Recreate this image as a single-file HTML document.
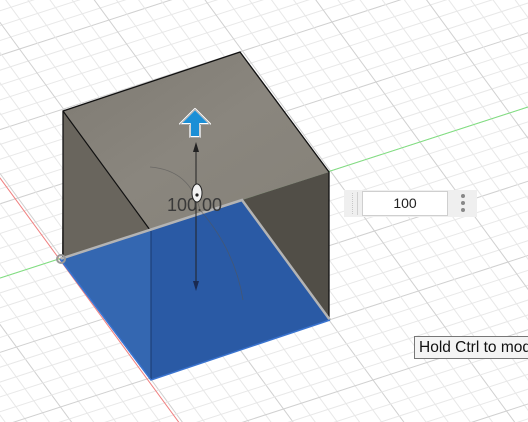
<!DOCTYPE html>
<html><head><meta charset="utf-8"><style>
html,body{margin:0;padding:0;width:528px;height:422px;overflow:hidden;background:#fff;font-family:"Liberation Sans",sans-serif;position:relative}
svg{position:absolute;left:0;top:0}
</style></head><body>
<svg id="s" width="528" height="422" viewBox="0 0 528 422">
<defs>
<linearGradient id="tg" x1="0" y1="0" x2="1" y2="1"><stop offset="0" stop-color="#7e7a72"/><stop offset="0.5" stop-color="#8a867e"/><stop offset="1" stop-color="#858178"/></linearGradient>
</defs>
<g id="grid"></g>
<line x1="-60" y1="96" x2="183" y2="428" stroke="#f08080" stroke-width="1"/>
<line x1="0" y1="278" x2="528" y2="107" stroke="#7ee07e" stroke-width="1"/>
<polygon points="63,111 240,52 329,172 242,200 150,230" fill="url(#tg)"/>
<polygon points="63,111 150,230 62,258" fill="#69655d"/>
<polygon points="242,200 329,172 329,320" fill="#514e47"/>
<polygon points="60,259 242,200 330,320 151,380" fill="#2a5aa5"/>
<polygon points="60,259 151,229.5 151,380" fill="#3467b1"/>
<line x1="151" y1="231" x2="151" y2="380" stroke="#1a3a70" stroke-width="1"/>
<polyline points="63,258 63,111 240,52 329,172 329,320" fill="none" stroke="#111" stroke-width="1.3"/>
<line x1="63" y1="111" x2="150" y2="230" stroke="#111" stroke-width="1.2"/>
<polyline points="60,259 242,200 330,320" fill="none" stroke="#b4b4b4" stroke-width="2.5"/>
<polyline points="330,320 151,380 60,259" fill="none" stroke="#3a74d0" stroke-width="1.5"/>
<circle cx="61" cy="259" r="4" fill="none" stroke="#999" stroke-width="2"/>
<path d="M150,167 Q190,170 200,210 Q235,250 243,300" fill="none" stroke="#555" stroke-width="0.8" opacity="0.6"/>
<line x1="196" y1="146" x2="196" y2="285" stroke="#222" stroke-width="1"/>
<path d="M193,152 L196,142 L199,152 Z" fill="#222"/>
<path d="M193,281 L196,291 L199,281 Z" fill="#1a2a50"/>
<text x="167" y="211" font-size="18" fill="#3a3a3a" font-family="Liberation Sans,sans-serif">100.00</text>
<ellipse cx="197" cy="193" rx="5" ry="9" fill="#f2f2f2" stroke="#222" stroke-width="1"/>
<circle cx="197" cy="195" r="1.6" fill="#222"/>
<path d="M195,109 L210,124 L200,124 L200,137 L190,137 L190,124 L180,124 Z" fill="#1b8fd6" stroke="#fff" stroke-width="2" stroke-linejoin="round"/>
<path d="M195,109 L210,124 L200,124 L200,137 L190,137 L190,124 L180,124 Z" fill="none" stroke="#333" stroke-width="0.7" transform="translate(0,0.5)" opacity="0.6"/>
</svg>
<div style="position:absolute;left:344px;top:190px;width:133px;height:27px;background:#efefef"></div>
<div style="position:absolute;left:352px;top:193px;width:0;height:21px;border-left:1px dotted #c8c8c8"></div>
<div style="position:absolute;left:357px;top:192px;width:1px;height:23px;background:#d0d0d0"></div>
<div style="position:absolute;left:362px;top:191px;width:84px;height:23px;background:#fff;border:1px solid #cfcfcf;font-size:14px;color:#222;text-align:center;line-height:23px">100</div>
<div style="position:absolute;left:461px;top:194px;width:4px;height:20px">
<div style="width:4px;height:4px;border-radius:2px;background:#888;margin-bottom:3px"></div>
<div style="width:4px;height:4px;border-radius:2px;background:#888;margin-bottom:3px"></div>
<div style="width:4px;height:4px;border-radius:2px;background:#888"></div></div>
<div style="position:absolute;left:414px;top:336px;width:110px;height:21px;background:#f4f4f4;border:1px solid #777;border-right:none;font-size:15.5px;color:#111;line-height:21px;padding-left:4px;white-space:nowrap;overflow:hidden">Hold Ctrl to modify</div>
<script>
var g=document.getElementById('grid');
var ox=62,oy=258,ax=1.79,ay=-0.58,bx=0.88,by=1.20,h='';
for(var k=-40;k<=40;k++){
 var m=k%5==0,c=m?'#d0d0d0':'#e8e8e8';
 var px=ox+bx*10*k,py=oy+by*10*k;
 h+='<line x1="'+(px-ax*600)+'" y1="'+(py-ay*600)+'" x2="'+(px+ax*600)+'" y2="'+(py+ay*600)+'" stroke="'+c+'" stroke-width="1"/>';
 px=ox+ax*10*k;py=oy+ay*10*k;
 h+='<line x1="'+(px-bx*600)+'" y1="'+(py-by*600)+'" x2="'+(px+bx*600)+'" y2="'+(py+by*600)+'" stroke="'+c+'" stroke-width="1"/>';
}
g.innerHTML=h;
</script>
</body></html>
